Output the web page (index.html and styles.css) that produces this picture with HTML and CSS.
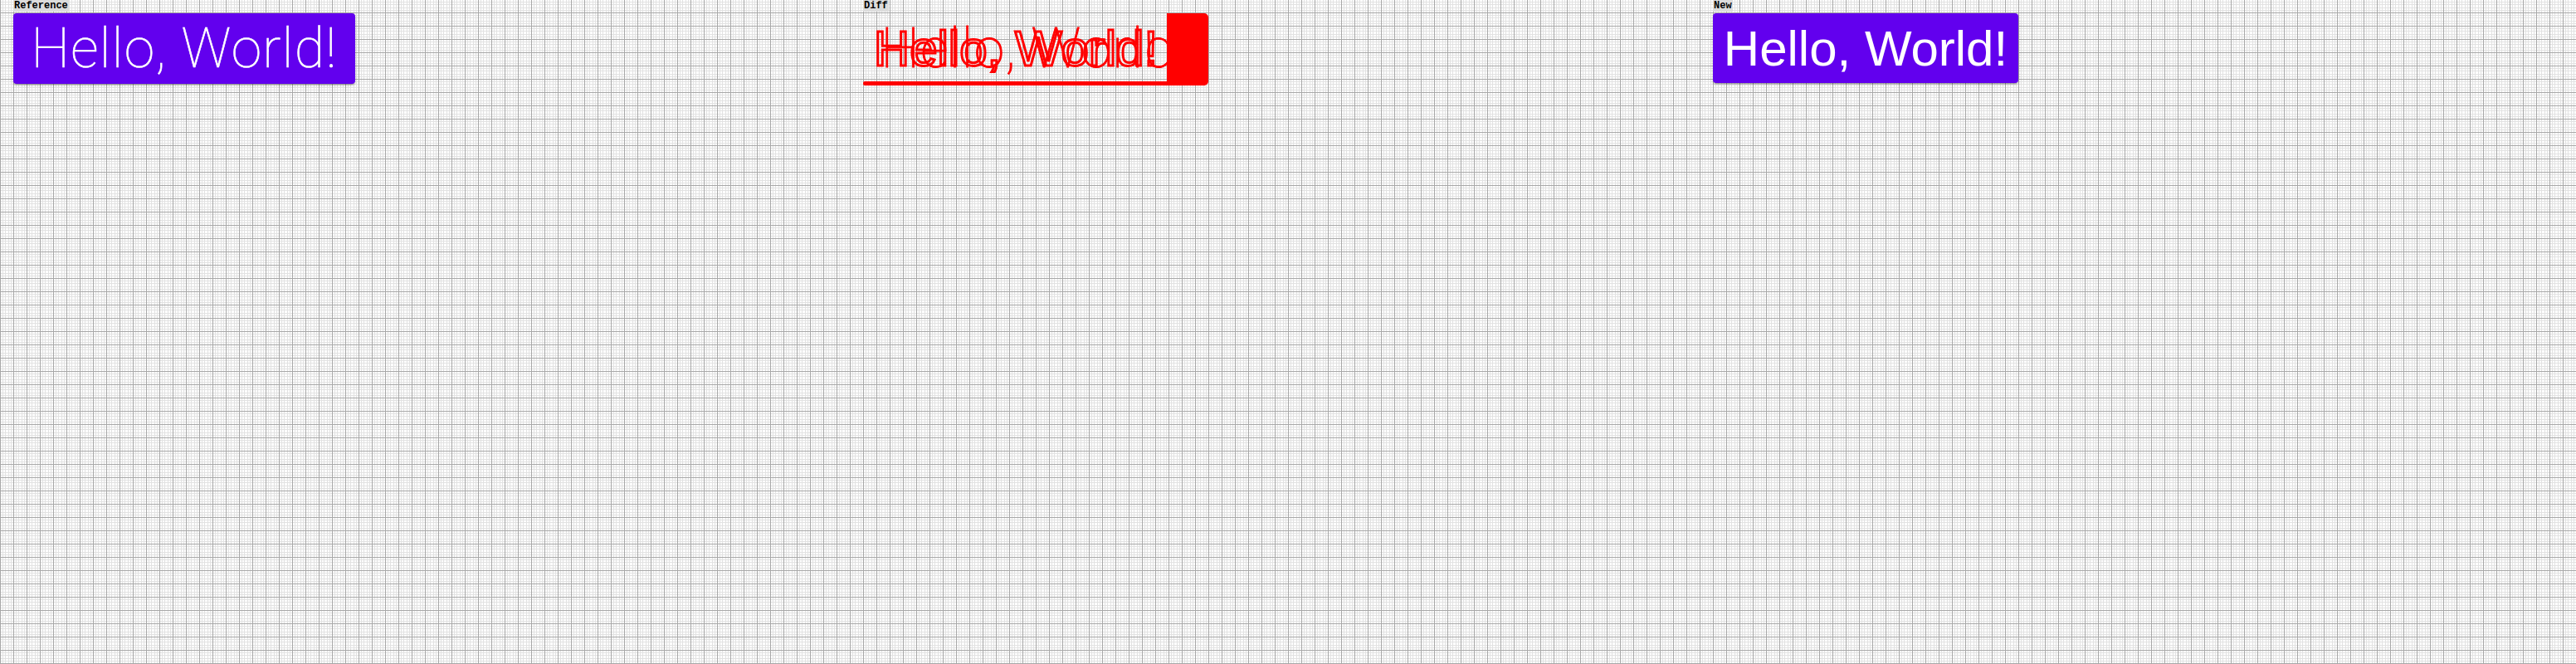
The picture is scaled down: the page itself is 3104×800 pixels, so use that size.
FILE: index.html
```html
<!DOCTYPE html>
<html>
<head>
<meta charset="utf-8">
<link rel="stylesheet" href="styles.css">
</head>
<body>
<div class="board">
  <section class="panel">
    <div class="tag">Reference</div>
    <div class="btn btn-ref"><span>Hello, World!</span></div>
  </section>
  <section class="panel">
    <div class="tag">Diff</div>
    <div class="diff">
      <div class="d-stripe"></div>
      <div class="d-block"></div>
      <div class="ghost ghost-new"><span>Hello, World!</span></div>
      <div class="ghost ghost-ref"><span>Hello, World!</span></div>
    </div>
  </section>
  <section class="panel">
    <div class="tag">New</div>
    <div class="btn btn-new"><span>Hello, World!</span></div>
  </section>
</div>
</body>
</html>
```
FILE: styles.css
```css
html, body {
  margin: 0;
  padding: 0;
}
body {
  width: 3104px;
  height: 800px;
  overflow: hidden;
  background-color: #fff;
  background-image:
    repeating-linear-gradient(90deg, #a8a8a8 0 1px, transparent 1px 16px),
    repeating-linear-gradient(0deg, #a8a8a8 0 1px, transparent 1px 16px),
    repeating-linear-gradient(90deg, #e2e2e2 0 1px, transparent 1px 3.2px),
    repeating-linear-gradient(0deg, #e2e2e2 0 1px, transparent 1px 3.2px);
}
.board {
  display: grid;
  grid-template-columns: repeat(3, 1024px);
}
.panel {
  display: flex;
  flex-direction: column;
  align-items: flex-start;
}
.tag {
  margin-left: 16px;
  padding: 0 1px;
  height: 14px;
  line-height: 14px;
  background: #dcdcdc;
  color: #000;
  font-family: "Liberation Mono", monospace;
  font-weight: bold;
  font-size: 12px;
}
.btn {
  margin: 2px 0 0 16px;
  background: #6200ee;
  color: #fff;
  border-radius: 4px;
  display: flex;
  align-items: center;
  justify-content: center;
  box-shadow: 0 3px 1px -2px rgba(0,0,0,.2), 0 2px 2px 0 rgba(0,0,0,.14), 0 1px 5px 0 rgba(0,0,0,.12);
}
.btn-ref, .ghost-ref {
  width: 412px;
  height: 85px;
  font-family: Roboto, sans-serif;
  font-weight: 100;
  font-size: 66px;
  letter-spacing: 1.4px;
}
.btn-ref {
  -webkit-text-stroke: 0.6px #fff;
}
.btn-new, .ghost-new {
  width: 368px;
  height: 84px;
  font-family: "Liberation Sans", Arial, sans-serif;
  font-size: 60px;
}
.diff {
  position: relative;
  margin: 2px 0 0 16px;
  width: 416px;
  height: 88px;
}
.d-stripe {
  position: absolute;
  left: 0;
  top: 82px;
  width: 412px;
  height: 5px;
  background: #ff0000;
  border-radius: 2px 0 0 2px;
}
.d-block {
  position: absolute;
  left: 366px;
  top: 0;
  width: 50px;
  height: 87px;
  background: #ff0000;
  border-radius: 0 5px 5px 0;
}
.ghost {
  position: absolute;
  left: 0;
  top: 0;
  display: flex;
  align-items: center;
  justify-content: center;
}
.ghost-ref {
  color: #ff0000;
  -webkit-text-stroke: 1px #ff0000;
}
.ghost-new {
  color: transparent;
  -webkit-text-stroke: 3px #ff0000;
}
```
